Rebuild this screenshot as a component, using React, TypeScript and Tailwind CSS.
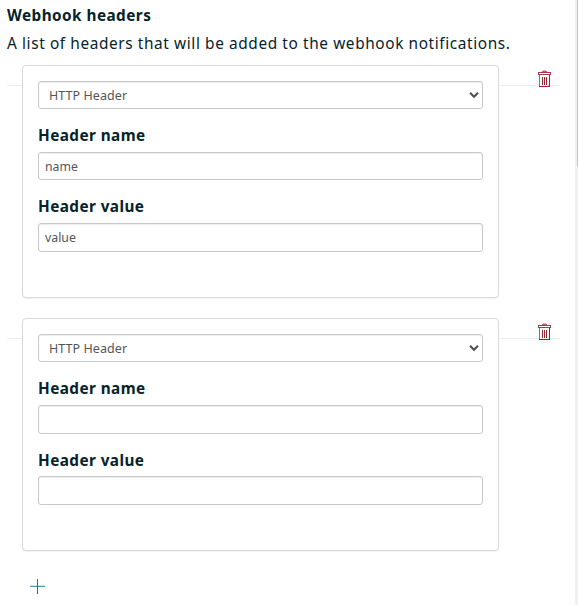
import React from "react";

type HeaderEntry = {
  name: string;
  value: string;
  nameHeight: string;
  valueLabel: string;
};

const entries: HeaderEntry[] = [
  { name: "name", value: "value", nameHeight: "h-7", valueLabel: "h-[43px] pt-[15px]" },
  { name: "", value: "", nameHeight: "h-[29px]", valueLabel: "h-[42px] pt-[15px]" },
];

const fieldBox =
  "block w-full rounded-[3px] border border-[#c9c9c9] bg-white text-[#555] shadow-[inset_0_1px_1px_rgba(0,0,0,0.075)] outline-none";
const labelText = "block text-[15.3px] leading-[22px] font-bold tracking-[0.44px] text-[#06232b]";

function TrashIcon() {
  return (
    <svg width="13" height="17" viewBox="0 0 13 17" fill="none" stroke="#9b2430" shapeRendering="crispEdges">
      <path d="M4 1.5h5" stroke="#b8636d" />
      <path d="M5 0.5h3" stroke="#dcb0b4" />
      <rect x="0.5" y="2.5" width="12" height="2" stroke="#a53d48" />
      <path d="M1.5 5v11" stroke="#b5606b" />
      <path d="M11.5 5v11M1 16.5h11" />
      <path d="M4.5 7v8M6.5 7v8M8.5 7v8" />
    </svg>
  );
}

function HeaderCard({ entry }: { entry: HeaderEntry }) {
  return (
    <div className="flex h-[233px] items-start">
      <div className="mt-5 h-px w-[15px] bg-[#ececec]" />
      <div className="h-[233px] w-[477px] rounded-[4px] border border-[#dadada] bg-white px-[15px] pt-[15px] shadow-[0_1px_1px_rgba(0,0,0,0.05)]">
        <div className={`${fieldBox} flex h-7 items-center justify-between pr-[3px] pl-[10px] text-[12.5px]`}>
          <span className="pt-[2px] tracking-[0.06px]">HTTP Header</span>
          <svg width="10" height="6" viewBox="0 0 10 6" fill="none" stroke="#4d4d4d" strokeWidth="2">
            <path d="M1 0.8l4 4 4-4" />
          </svg>
        </div>
        <label className={`${labelText} h-[43px] pt-[15px]`}>Header name</label>
        <input className={`${fieldBox} ${entry.nameHeight} px-[6px] text-[12.3px]`} defaultValue={entry.name} />
        <label className={`${labelText} ${entry.valueLabel}`}>Header value</label>
        <input className={`${fieldBox} h-[29px] px-[6px] text-[12.3px]`} defaultValue={entry.value} />
      </div>
      <div className="relative mt-5 h-px w-[61px] bg-[#ececec]">
        <button className="absolute -top-[15px] left-[39px]" aria-label="Remove header">
          <TrashIcon />
        </button>
      </div>
    </div>
  );
}

export default function App() {
  return (
    <div className="flex h-[605px] w-[578px] overflow-hidden bg-white font-['Noto_Sans','Open_Sans',sans-serif]">
      <main className="w-[575px] pl-[7px] text-[#06232b]">
        <h2 className="pt-1 text-[15.3px] leading-[22px] font-bold tracking-[0.46px]">
          <span>Webhook headers</span>
        </h2>
        <p className="mt-[7px] h-[32px] text-[15.4px] leading-[22px] whitespace-nowrap">
          <span className="tracking-[0.6px]">A list of headers that will be added to the webhook notifications.</span>
        </p>
        <div className="flex flex-col gap-5">
          {entries.map((entry, i) => (
            <HeaderCard key={i} entry={entry} />
          ))}
        </div>
        <button className="mt-7 ml-[23px] block" aria-label="Add header">
          <svg width="15" height="15" viewBox="0 0 15 15" fill="none" shapeRendering="crispEdges">
            <path d="M0 6.5h15" stroke="#d3e5eb" />
            <path d="M0 7.5h15" stroke="#4b9bb3" />
            <path d="M7.5 0v15" stroke="#2b7084" />
          </svg>
        </button>
      </main>
      <div className="flex w-[3px] justify-end bg-[#f0f0f0]">
        <div className="h-[166px] w-px bg-[#c1c1c1]" />
      </div>
    </div>
  );
}
